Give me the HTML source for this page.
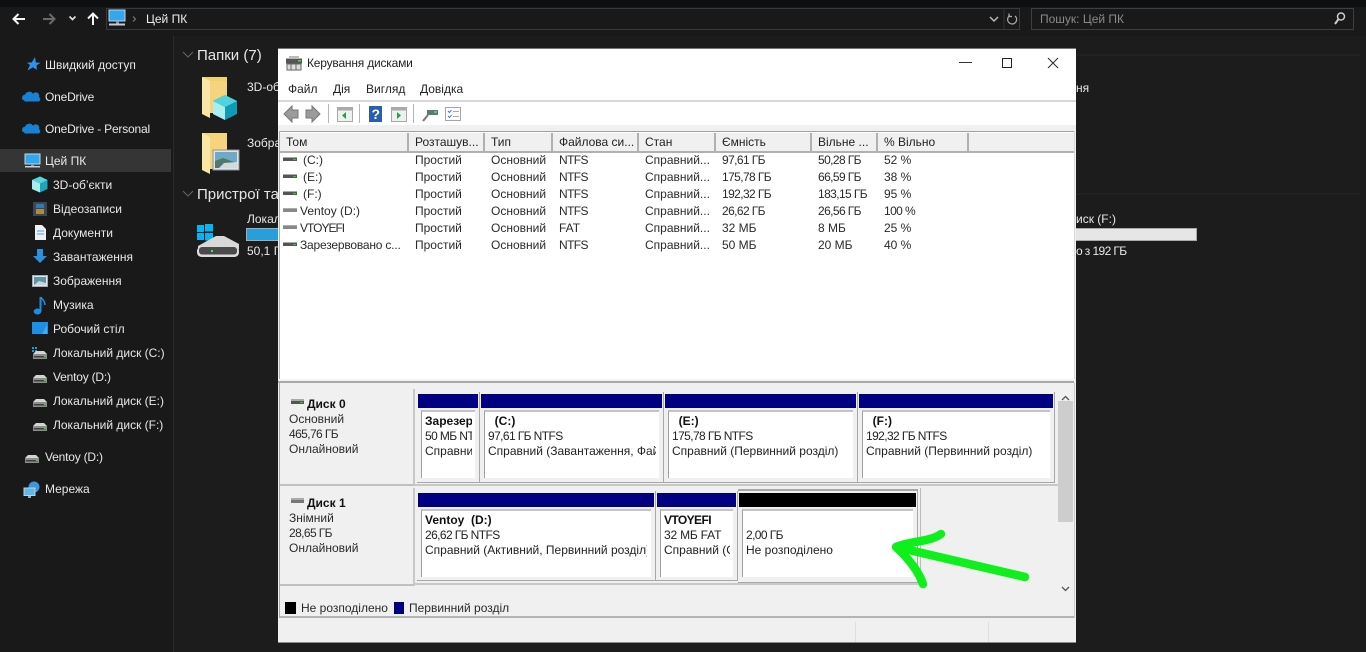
<!DOCTYPE html>
<html lang="uk"><head><meta charset="utf-8"><title>Керування дисками</title>
<style>
html,body{margin:0;padding:0;width:1366px;height:652px;overflow:hidden;background:#191919}
body{position:relative;font-family:"Liberation Sans",sans-serif;font-size:12px;color:#e8e8e8;filter:blur(.3px)}
.a,.t,.d,.w{position:absolute}
.t{white-space:nowrap;line-height:14px}
.w{color:#1a1a1a}
.w .t{color:#222}
.b{font-weight:bold;color:#111!important}
.sv{position:absolute;overflow:visible}
.clip{overflow:hidden;white-space:nowrap;position:absolute;line-height:15px;color:#222}
.part{position:absolute;background:#f0f0f0;border:1px solid #a8a8a8;border-top:0;border-left:0}
.hd{position:absolute;background:#000080}
.body{position:absolute;background:#fff;border-top:2px solid #c4c4c4;border-left:1px solid #a0a0a0;overflow:hidden;box-sizing:border-box}
.hc{position:absolute;top:133px;height:18px;box-sizing:border-box;border-right:2px solid #b0b0b0;line-height:19px;padding-left:6px;color:#222;white-space:nowrap}
.c{position:absolute;white-space:nowrap;line-height:14px;color:#2a2a2a}
.n{letter-spacing:-.6px}
.v{letter-spacing:-.2px}
</style></head><body>

<!-- Explorer top -->
<div class="a" style="left:0;top:0;width:1366px;height:7px;background:#0d0f11"></div>
<div class="a" style="left:0;top:7px;width:1366px;height:29px;background:#191919"></div>
<div class="a" style="left:106px;top:8px;width:912px;height:20px;border:1px solid #3a3a3a;background:#191919"></div>
<div class="a" style="left:1031px;top:8px;width:321px;height:20px;border:1px solid #3f3f3f;background:#191919"></div>
<div class="a" style="left:173px;top:36px;width:1px;height:616px;background:#2b2b2b"></div>
<div class="a" style="left:174px;top:36px;width:1192px;height:616px;background:#1c1c1c"></div>
<div class="a" style="left:0;top:149px;width:171px;height:23px;background:#353535"></div>

<svg class="sv" style="left:0;top:0" width="1366" height="652" fill="none">
 <path d="M25 19H14M18.500 14L13.500 19L18.500 24" stroke="#f4f4f4" stroke-width="2"/>
 <path d="M43 19H54M49.500 14L54.500 19L49.500 24" stroke="#6a6a6a" stroke-width="2"/>
 <path d="M69.500 16.500L72.500 19.500L75.500 16.500" stroke="#ddd" stroke-width="1.700"/>
 <path d="M93 25V14M88 18.500L93 13.500L98 18.500" stroke="#f4f4f4" stroke-width="2"/>
 <rect x="109" y="10" width="16" height="11" fill="#35a6ec" stroke="#b9d8ea"/><rect x="116" y="21" width="3" height="3" fill="#8a9aa5"/><rect x="109" y="23.500" width="16" height="2" fill="#c4d0d8"/>
 <path d="M133 16.500L135.500 19L133 21.500" stroke="#777" stroke-width="1.200"/>
 <path d="M990 17L994 21L998 17" stroke="#bbb" stroke-width="1.500"/>
 <path d="M1004 8V29" stroke="#333"/>
 <path d="M1015 16a4.500 4.500 0 1 1-5-.500M1009 13.500V16.500H1012" stroke="#aaa" stroke-width="1.200"/>
 <circle cx="1341" cy="16.500" r="3.500" stroke="#ccc" stroke-width="1.500"/><path d="M1338.500 19L1335 24" stroke="#ccc" stroke-width="2"/>
 <path d="M183 52L188 57L193 52M183 191L188 196L193 191" stroke="#666" stroke-width="1"/>
 <path d="M1076 55H1360M1076 194H1360" stroke="#262626"/>

 <!-- nav icons -->
 <path d="M35 57l.8 5.500 4.700.3-4 2.700.3 4.500-3.600-2.800-5.700 3.300 2.500-5.500-3-2.300 4.800-.3z" fill="#2f94e8"/>
 <path d="M24 100.500a3 3 0 0 1 1-5.800 4.500 4.500 0 0 1 8-1 3.500 3.500 0 0 1 6 3.500 2.300 2.300 0 0 1-.6 4.300H25z" fill="#1a80d2"/>
 <path d="M24 132.500a3 3 0 0 1 1-5.800 4.500 4.500 0 0 1 8-1 3.500 3.500 0 0 1 6 3.500 2.300 2.300 0 0 1-.6 4.300H25z" fill="#1a80d2"/>
 <rect x="25" y="154" width="15" height="10" fill="#35a6ec" stroke="#bcd9ea"/><rect x="31" y="164" width="3" height="2" fill="#8a9aa5"/><rect x="25" y="166" width="15" height="1.500" fill="#c4d0d8"/>
 <path d="M40 176.500l7.500 3.500v9l-7.500 3.500-8-3.500v-9z" fill="#1aa6bd"/><path d="M32 180l8 3.500v9l-8-3.500z" fill="#a9ecef"/><path d="M32 180l8-3.500 7.500 3.500-7.500 3.500z" fill="#5cd3dc"/>
 <rect x="33" y="202" width="14" height="14" fill="#3e4656"/><rect x="36" y="204" width="8" height="4" fill="#2e7ab8"/><rect x="36" y="209" width="8" height="5" fill="#b08a36"/>
 <path d="M35 225h7l4 4v11H35z" fill="#eef1f4"/><path d="M37 231h7M37 234h7" stroke="#5c9ad0"/>
 <path d="M37 249h6v7h4l-7 7-7-7h4z" fill="#2d8fe0"/>
 <rect x="32.500" y="275.500" width="15" height="11" fill="#dfe6ea" stroke="#aab"/><rect x="34" y="277" width="12" height="8" fill="#5f93a6"/><path d="M34 285l5-4 7 2v2z" fill="#c8d6da"/>
 <path d="M40.500 297v14" stroke="#1a8fe0" stroke-width="2"/><ellipse cx="37.500" cy="311.500" rx="3.800" ry="3" fill="#1a8fe0"/><path d="M41 297c1 3 4 3 4 8" stroke="#1a8fe0" stroke-width="1.500"/>
 <rect x="32" y="322" width="16" height="12" fill="#1d8fe5"/><path d="M42 334l5-9v9z" fill="#45aaf0"/>
 <g fill="#1aa0c8"><rect x="32" y="347" width="2" height="2"/><rect x="35" y="347" width="2" height="2"/><rect x="32" y="350" width="2" height="2"/><rect x="35" y="350" width="2" height="2"/></g>
 <g fill="#d4d4d4"><path d="M36 351h8l3 3H33z"/><path d="M36 375h8l3 3H33z"/><path d="M36 399h8l3 3H33z"/><path d="M36 423h8l3 3H33z"/><path d="M28 455h8l3 3H25z"/></g>
 <g fill="#8e8e8e"><rect x="33" y="354" width="14" height="5"/><rect x="33" y="378" width="14" height="5"/><rect x="33" y="402" width="14" height="5"/><rect x="33" y="426" width="14" height="5"/><rect x="25" y="458" width="14" height="5"/></g>
 <g fill="#3f3f3f"><rect x="34" y="356" width="12" height="1.500"/><rect x="34" y="380" width="12" height="1.500"/><rect x="34" y="404" width="12" height="1.500"/><rect x="34" y="428" width="12" height="1.500"/><rect x="26" y="460" width="12" height="1.500"/></g>
 <g fill="#3be03b"><rect x="44" y="356" width="2" height="1"/><rect x="44" y="380" width="2" height="1"/><rect x="44" y="404" width="2" height="1"/><rect x="44" y="428" width="2" height="1"/><rect x="36" y="460" width="2" height="1"/></g>
 <circle cx="34" cy="487" r="5.500" fill="#3e95d8"/><rect x="24" y="488" width="11" height="7.500" fill="#5db8ee" stroke="#b5d5e8"/><rect x="28" y="496" width="3" height="2" fill="#9ab"/>

 <!-- folders -->
 <rect x="202" y="77" width="25" height="36" fill="#f4cf6e"/><path d="M202 77l8 4v37l-8-4z" fill="#fbe7a5"/><path d="M210 81h17v32h-17z" fill="#f6d47d"/>
 <path d="M225 95l12 6v13l-12 6-12-6v-13z" fill="#109ab8"/><path d="M213 101l12 6v13l-12-6z" fill="#aaeef0"/><path d="M213 101l12-6 12 6-12 6z" fill="#52d2dd"/>
 <rect x="202" y="133" width="25" height="36" fill="#f6d47d"/><path d="M202 133l8 4v37l-8-4z" fill="#fbe7a5"/>
 <rect x="213" y="150" width="26" height="20" fill="#dfe4e8" stroke="#8d9498"/><rect x="215" y="152" width="22" height="16" fill="#6fa9c7"/><path d="M215 168v-7l8-3 14 5v5z" fill="#52786c"/><path d="M224 163l13-1v6h-18z" fill="#cfdadd"/>
 <!-- disk big -->
 <rect x="197" y="225" width="7" height="7" fill="#06b4f2"/><rect x="205" y="224" width="8" height="7.500" fill="#06b4f2"/><rect x="197" y="233" width="7" height="7" fill="#06b4f2"/><rect x="205" y="233" width="8" height="7.500" fill="#06b4f2"/>
 <path d="M198 246L216 236H224L239 244V249H198Z" fill="#d8d8d8"/>
 <rect x="197" y="246.500" width="42" height="10.500" rx="4.500" fill="#dcdcdc"/><rect x="199" y="247" width="38" height="7.500" rx="3" fill="#4a4a4a"/><rect x="211" y="250" width="2" height="2" fill="#4ee04e"/>
</svg>

<!-- explorer text -->
<span class="t" style="left:146px;top:12px;color:#eee">Цей ПК</span>
<span class="t" style="left:1040px;top:12px;color:#8a8a8a">Пошук: Цей ПК</span>
<span class="t" style="left:197px;top:47px;font-size:15px;line-height:17px;color:#e6e6e6">Папки (7)</span>
<span class="t" style="left:197px;top:186px;font-size:15px;line-height:17px;color:#e6e6e6">Пристрої та</span>
<span class="t" style="left:247px;top:80px">3D-об</span>
<span class="t" style="left:247px;top:136px">Зобра</span>
<span class="t" style="left:247px;top:212px">Локал</span>
<span class="t" style="left:247px;top:244px">50,1 Г</span>
<div class="a" style="left:246px;top:228px;width:32px;height:13px;background:#26a0da;border:1px solid #aaa;border-right:0;box-sizing:border-box"></div>
<span class="t" style="left:1076px;top:81px">ня</span>
<span class="t" style="left:1076px;top:212px">иск (F:)</span>
<span class="t n" style="left:1076px;top:244px">о з 192 ГБ</span>
<div class="a" style="left:1076px;top:228px;width:121px;height:13px;background:#e6e6e6;border:1px solid #aaa;border-left:0;box-sizing:border-box"></div>

<span class="t" style="left:45px;top:58px">Швидкий доступ</span>
<span class="t v" style="left:45px;top:90px">OneDrive</span>
<span class="t v" style="left:45px;top:122px">OneDrive - Personal</span>
<span class="t" style="left:45px;top:154px">Цей ПК</span>
<span class="t" style="left:53px;top:178px">3D-об’єкти</span>
<span class="t" style="left:53px;top:202px">Відеозаписи</span>
<span class="t" style="left:53px;top:226px">Документи</span>
<span class="t" style="left:53px;top:250px">Завантаження</span>
<span class="t" style="left:53px;top:274px">Зображення</span>
<span class="t" style="left:53px;top:298px">Музика</span>
<span class="t" style="left:53px;top:322px">Робочий стіл</span>
<span class="t" style="left:53px;top:346px">Локальний диск (C:)</span>
<span class="t v" style="left:53px;top:370px">Ventoy (D:)</span>
<span class="t" style="left:53px;top:394px">Локальний диск (E:)</span>
<span class="t" style="left:53px;top:418px">Локальний диск (F:)</span>
<span class="t v" style="left:45px;top:450px">Ventoy (D:)</span>
<span class="t" style="left:45px;top:482px">Мережа</span>

<!-- Window -->
<div class="a" style="left:278px;top:49px;width:798px;height:594px;background:#f0f0f0;box-shadow:0 -1px 0 #777"></div>
<div class="a" style="left:278px;top:49px;width:798px;height:51px;background:#fff"></div>
<div class="a" style="left:278px;top:100px;width:798px;height:2px;background:#d8d8d8"></div>
<div class="a" style="left:278px;top:102px;width:798px;height:23px;background:#fff"></div>
<div class="a" style="left:278px;top:125px;width:798px;height:5px;background:#f0f0f0"></div>
<div class="a" style="left:280px;top:131px;width:794px;height:248px;background:#fff;border-top:1px solid #a0a0a0;box-sizing:border-box"></div>
<div class="a" style="left:279px;top:131px;width:1px;height:248px;background:#b0b0b0"></div>
<div class="a" style="left:1074px;top:131px;width:1px;height:248px;background:#d8d8d8"></div>
<div class="a" style="left:278px;top:379px;width:796px;height:2px;background:#f4f4f4;border-bottom:2px solid #a8a8a8"></div>
<div class="a" style="left:279px;top:383px;width:1px;height:235px;background:#a8a8a8"></div>
<div class="a" style="left:1074px;top:383px;width:1px;height:235px;background:#c8c8c8"></div>
<div class="a" style="left:280px;top:133px;width:794px;height:18px;background:#f0f0f0;border-bottom:2px solid #b0b0b0;box-sizing:content-box"></div>

<svg class="sv" style="left:278px;top:49px" width="798" height="80" fill="none">
 <rect x="8" y="9.500" width="16" height="5" fill="#555"/><rect x="11" y="7" width="10" height="3" fill="#bbb"/><rect x="9" y="15" width="14" height="6" fill="#ddd" stroke="#666"/><rect x="20" y="11" width="3" height="1.500" fill="#4d4"/><path d="M13 15v6M18 15v6" stroke="#666"/>
 <path d="M681 13.500H694" stroke="#333" stroke-width="1"/>
 <rect x="724.500" y="9.500" width="9" height="9" stroke="#222" stroke-width="1"/>
 <path d="M770 9L780 19M780 9L770 19" stroke="#333" stroke-width="1.100"/>
 <path d="M6 65l8-8v4h6v8h-6v4z" fill="#9b9b9b" stroke="#777"/>
 <path d="M42 65l-8-8v4h-6v8h6v4z" fill="#9b9b9b" stroke="#777"/>
 <path d="M50.500 55V74M81.500 55V74M135.500 55V74" stroke="#b5b5b5"/>
 <rect x="59.500" y="58.500" width="15" height="14" fill="#eef2ee" stroke="#a8a8a8"/><rect x="59.500" y="58.500" width="15" height="3" fill="#aaa"/><path d="M68 63v7l-4-3.500z" fill="#25a04a"/>
 <rect x="91" y="57" width="13" height="16" fill="#2a5fb0"/><text x="93.500" y="70" font-family="Liberation Sans" font-size="14" font-weight="bold" fill="#fff">?</text>
 <rect x="113.500" y="58.500" width="15" height="14" fill="#eef2ee" stroke="#a8a8a8"/><rect x="113.500" y="58.500" width="15" height="3" fill="#aaa"/><path d="M119 63v7l4-3.500z" fill="#25a04a"/>
 <rect x="149" y="61" width="11" height="5" fill="#5a7a7a"/><rect x="156" y="62" width="3" height="2" fill="#4d4"/><path d="M150 66l-5 6" stroke="#777" stroke-width="2"/>
 <rect x="167.500" y="58.500" width="15" height="13" fill="#fff" stroke="#a5a5a5"/><path d="M170 62l1.500 1.500 2-2.500M170 67l1.500 1.500 2-2.500" stroke="#3a70c0"/><path d="M175 62.500h6M175 67.500h6" stroke="#aaa"/>
</svg>

<span class="w t v" style="left:307px;top:56px;color:#222">Керування дисками</span>
<span class="w t" style="left:288px;top:82px;color:#222">Файл</span>
<span class="w t" style="left:333px;top:82px;color:#222">Дія</span>
<span class="w t" style="left:366px;top:82px;color:#222">Вигляд</span>
<span class="w t" style="left:420px;top:82px;color:#222">Довідка</span>

<!-- header -->
<div class="hc" style="left:280px;width:129px">Том</div>
<div class="hc" style="left:409px;width:76px">Розташув...</div>
<div class="hc" style="left:485px;width:68px">Тип</div>
<div class="hc" style="left:553px;width:86px">Файлова си...</div>
<div class="hc" style="left:639px;width:77px">Стан</div>
<div class="hc" style="left:716px;width:96px">Ємність</div>
<div class="hc" style="left:812px;width:66px">Вільне ...</div>
<div class="hc" style="left:878px;width:91px">% Вільно</div>

<svg class="sv" style="left:283px;top:155px" width="16" height="100">
 <g fill="#555"><rect width="14" height="3" y="3"/><rect width="14" height="3" y="20"/><rect width="14" height="3" y="37"/><rect width="14" height="3" y="54" fill="#888"/><rect width="14" height="3" y="71" fill="#888"/><rect width="14" height="3" y="88"/></g>
 <g fill="#3c3"><rect x="10" y="4" width="3" height="1"/><rect x="10" y="21" width="3" height="1"/><rect x="10" y="38" width="3" height="1"/><rect x="10" y="89" width="3" height="1"/></g>
 <g fill="#aaa"><rect width="14" height="1" y="2"/><rect width="14" height="1" y="19"/><rect width="14" height="1" y="36"/><rect width="14" height="1" y="53"/><rect width="14" height="1" y="70"/><rect width="14" height="1" y="87"/></g>
</svg>

<span class="c" style="left:303px;top:153px">(C:)</span><span class="c" style="left:415px;top:153px">Простий</span><span class="c" style="left:491px;top:153px">Основний</span><span class="c n" style="left:559px;top:153px">NTFS</span><span class="c" style="left:645px;top:153px">Справний...</span><span class="c n" style="left:722px;top:153px">97,61 ГБ</span><span class="c n" style="left:818px;top:153px">50,28 ГБ</span><span class="c" style="left:884px;top:153px">52 %</span>
<span class="c" style="left:303px;top:170px">(E:)</span><span class="c" style="left:415px;top:170px">Простий</span><span class="c" style="left:491px;top:170px">Основний</span><span class="c n" style="left:559px;top:170px">NTFS</span><span class="c" style="left:645px;top:170px">Справний...</span><span class="c n" style="left:722px;top:170px">175,78 ГБ</span><span class="c n" style="left:818px;top:170px">66,59 ГБ</span><span class="c" style="left:884px;top:170px">38 %</span>
<span class="c" style="left:303px;top:187px">(F:)</span><span class="c" style="left:415px;top:187px">Простий</span><span class="c" style="left:491px;top:187px">Основний</span><span class="c n" style="left:559px;top:187px">NTFS</span><span class="c" style="left:645px;top:187px">Справний...</span><span class="c n" style="left:722px;top:187px">192,32 ГБ</span><span class="c n" style="left:818px;top:187px">183,15 ГБ</span><span class="c" style="left:884px;top:187px">95 %</span>
<span class="c" style="left:300px;top:204px">Ventoy (D:)</span><span class="c" style="left:415px;top:204px">Простий</span><span class="c" style="left:491px;top:204px">Основний</span><span class="c n" style="left:559px;top:204px">NTFS</span><span class="c" style="left:645px;top:204px">Справний...</span><span class="c n" style="left:722px;top:204px">26,62 ГБ</span><span class="c n" style="left:818px;top:204px">26,56 ГБ</span><span class="c n" style="left:884px;top:204px">100 %</span>
<span class="c" style="left:300px;top:221px;letter-spacing:-1px">VTOYEFI</span><span class="c" style="left:415px;top:221px">Простий</span><span class="c" style="left:491px;top:221px">Основний</span><span class="c" style="left:559px;top:221px">FAT</span><span class="c" style="left:645px;top:221px">Справний...</span><span class="c" style="left:722px;top:221px">32 МБ</span><span class="c" style="left:818px;top:221px">8 МБ</span><span class="c" style="left:884px;top:221px">25 %</span>
<span class="c v" style="left:300px;top:238px">Зарезервовано с...</span><span class="c" style="left:415px;top:238px">Простий</span><span class="c" style="left:491px;top:238px">Основний</span><span class="c n" style="left:559px;top:238px">NTFS</span><span class="c" style="left:645px;top:238px">Справний...</span><span class="c" style="left:722px;top:238px">50 МБ</span><span class="c" style="left:818px;top:238px">20 МБ</span><span class="c" style="left:884px;top:238px">40 %</span>

<!-- Disk pane -->
<div class="a" style="left:280px;top:389px;width:135px;height:97px;background:#f0f0f0;border-right:2px solid #c8c8c8;border-bottom:2px solid #c0c0c0;box-sizing:border-box"></div>
<div class="a" style="left:280px;top:488px;width:135px;height:98px;background:#f0f0f0;border-right:2px solid #c8c8c8;border-bottom:2px solid #c0c0c0;box-sizing:border-box"></div>
<div class="a" style="left:415px;top:484px;width:643px;height:2px;background:#c8c8c8"></div>
<svg class="sv" style="left:291px;top:398px" width="16" height="110"><rect width="13" height="2" y="1" fill="#aaa"/><rect width="13" height="3" y="3" fill="#555"/><rect x="9" y="4" width="3" height="1" fill="#3c3"/><rect width="13" height="2" y="100" fill="#aaa"/><rect width="13" height="3" y="102" fill="#777"/></svg>
<span class="c b" style="left:307px;top:397px">Диск 0</span>
<span class="c" style="left:289px;top:412px">Основний</span>
<span class="c n" style="left:289px;top:427px">465,76 ГБ</span>
<span class="c" style="left:289px;top:442px">Онлайновий</span>
<span class="c b" style="left:307px;top:496px">Диск 1</span>
<span class="c" style="left:289px;top:511px">Знімний</span>
<span class="c n" style="left:289px;top:526px">28,65 ГБ</span>
<span class="c" style="left:289px;top:541px">Онлайновий</span>

<!-- disk 0 partitions -->
<div class="part" style="left:417px;top:392px;width:62px;height:90px"></div><div class="hd" style="left:418px;top:394px;width:60px;height:14px"></div>
<div class="body" style="left:421px;top:410px;width:54px;height:68px"></div>
<div class="clip" style="left:425px;top:414px;width:47px"><b style="color:#111">Зарезер</b><br><span class="n">50 МБ NTFS</span><br>Справний</div>
<div class="part" style="left:480px;top:392px;width:183px;height:90px"></div><div class="hd" style="left:481px;top:394px;width:181px;height:14px"></div>
<div class="body" style="left:484px;top:410px;width:175px;height:68px"></div>
<div class="clip" style="left:488px;top:414px;width:168px"><b style="color:#111">&nbsp; (C:)</b><br><span class="n">97,61 ГБ NTFS</span><br>Справний (Завантаження, Файл</div>
<div class="part" style="left:664px;top:392px;width:193px;height:90px"></div><div class="hd" style="left:665px;top:394px;width:191px;height:14px"></div>
<div class="body" style="left:668px;top:410px;width:185px;height:68px"></div>
<div class="clip" style="left:672px;top:414px;width:180px"><b style="color:#111">&nbsp; (E:)</b><br><span class="n">175,78 ГБ NTFS</span><br>Справний (Первинний розділ)</div>
<div class="part" style="left:858px;top:392px;width:196px;height:90px"></div><div class="hd" style="left:859px;top:394px;width:194px;height:14px"></div>
<div class="body" style="left:862px;top:410px;width:188px;height:68px"></div>
<div class="clip" style="left:866px;top:414px;width:180px"><b style="color:#111">&nbsp; (F:)</b><br><span class="n">192,32 ГБ NTFS</span><br>Справний (Первинний розділ)</div>

<!-- disk 1 partitions -->
<div class="part" style="left:417px;top:491px;width:238px;height:89px"></div><div class="hd" style="left:418px;top:493px;width:236px;height:14px"></div>
<div class="body" style="left:421px;top:509px;width:230px;height:68px"></div>
<div class="clip" style="left:425px;top:513px;width:222px"><b style="color:#111">Ventoy&nbsp; (D:)</b><br><span class="n">26,62 ГБ NTFS</span><br>Справний (Активний, Первинний розділ)</div>
<div class="part" style="left:656px;top:491px;width:81px;height:89px"></div><div class="hd" style="left:657px;top:493px;width:79px;height:14px"></div>
<div class="body" style="left:660px;top:509px;width:73px;height:68px"></div>
<div class="clip" style="left:664px;top:513px;width:66px"><b style="color:#111;letter-spacing:-.6px">VTOYEFI</b><br><span class="v">32 МБ FAT</span><br>Справний (Системний</div>
<div class="part" style="left:738px;top:489px;width:179px;height:91px;border-top:2px solid #a8a8a8"></div><div class="hd" style="left:739px;top:493px;width:177px;height:14px;background:#000"></div>
<div class="body" style="left:742px;top:509px;width:171px;height:68px"></div>
<div class="clip" style="left:746px;top:513px;width:160px">&nbsp;<br><span class="n">2,00 ГБ</span><br>Не розподілено</div>
<div class="a" style="left:920px;top:488px;width:1px;height:94px;background:#bbb"></div>
<div class="a" style="left:415px;top:583px;width:505px;height:2px;background:#c8c8c8"></div>

<!-- scrollbar -->
<div class="a" style="left:1058px;top:392px;width:15px;height:203px;background:#f0f0f0"></div>
<div class="a" style="left:1058px;top:401px;width:15px;height:121px;background:#cdcdcd"></div>
<svg class="sv" style="left:1058px;top:392px" width="15" height="203" fill="none"><path d="M4 8L7.500 4.500L11 8M4 195L7.500 198.500L11 195" stroke="#555" stroke-width="1.300"/></svg>

<!-- legend -->
<div class="a" style="left:280px;top:595px;width:794px;height:3px;background:#f0f0f0"></div>
<div class="a" style="left:280px;top:598px;width:794px;height:20px;background:#f0f0f0;border-bottom:2px solid #b4b4b4;box-sizing:border-box"></div>
<div class="a" style="left:285px;top:602px;width:11px;height:12px;background:#000"></div>
<div class="a" style="left:394px;top:602px;width:10px;height:12px;background:#000080"></div>
<span class="c" style="left:301px;top:601px">Не розподілено</span>
<span class="c" style="left:409px;top:601px">Первинний розділ</span>

<!-- status -->
<div class="a" style="left:855px;top:622px;width:1px;height:20px;background:#ddd"></div>
<div class="a" style="left:988px;top:622px;width:1px;height:20px;background:#ddd"></div>
<div class="a" style="left:278px;top:642px;width:798px;height:1px;background:#8a8a8a"></div>

<!-- arrow -->
<svg class="sv" style="left:0;top:0" width="1366" height="652" fill="none">
 <path d="M1025 577C985 568 940 557 896 547C910 541 930 542 941 534M896 547C908 558 918 570 923 584" stroke="#0eef1c" stroke-width="8.500" stroke-linecap="round" stroke-linejoin="round"/>
</svg>
</body></html>
